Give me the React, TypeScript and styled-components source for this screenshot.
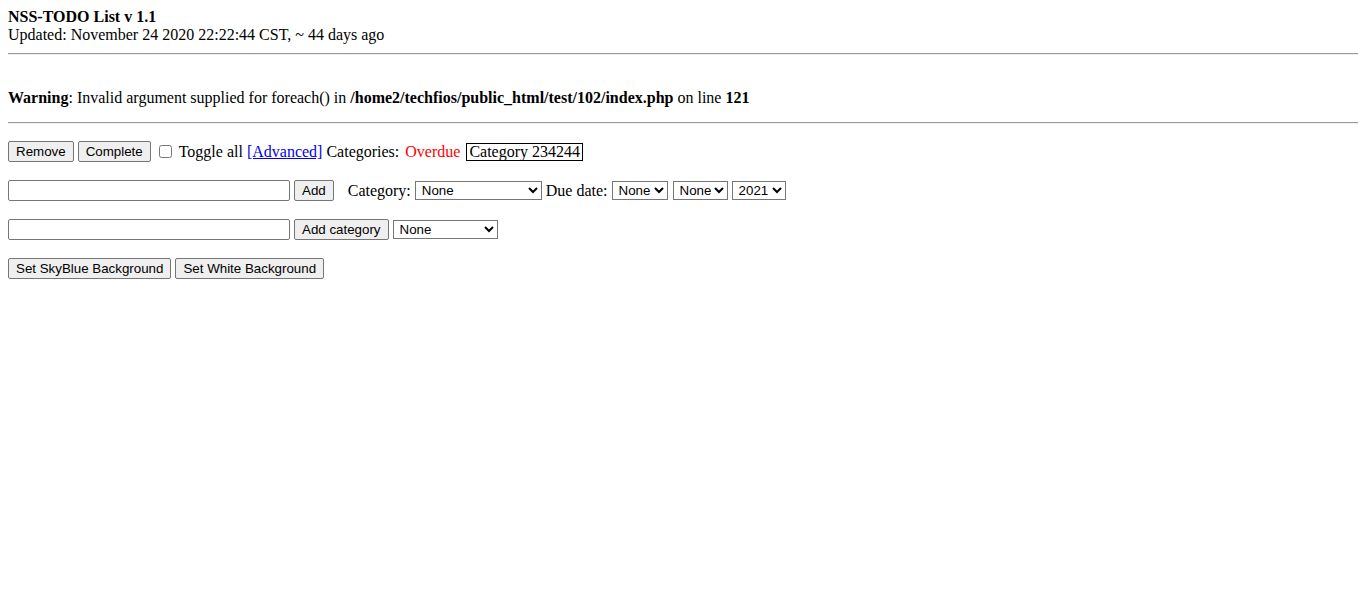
import React from "react";
import styled, { createGlobalStyle } from "styled-components";

const Global = createGlobalStyle`
  html, body { background: #fff; }
  body {
    margin: 8px;
    font-family: "Liberation Serif", "Times New Roman", serif;
    font-size: 16px;
    color: #000;
  }
`;

const Header = styled.header`
  line-height: 18.4px;
`;

const Title = styled.div`
  font-weight: bold;
`;

const Rule = styled.hr`
  margin: 8px 0;
  border: 0;
  border-top: 1px solid #9a9a9a;
  border-bottom: 1px solid #eeeeee;
  height: 0;
`;

const Warning = styled.div`
  line-height: 18.4px;
  padding: 26px 0 7px;
`;

const Form = styled.form`
  display: flex;
  flex-direction: column;
  gap: 18px;
  padding-top: 9px;
`;

const Row = styled.div<{ $gap?: number }>`
  display: flex;
  align-items: center;
  height: 21px;
  gap: ${(p) => p.$gap ?? 4}px;
  white-space: nowrap;
`;

const Button = styled.button`
  font-family: "Liberation Sans", Arial, sans-serif;
  font-size: 13.333px;
  height: 21px;
  padding: 1px 7px;
  border: 1px solid #767676;
  border-radius: 2px;
  background: #efefef;
  color: #000;
  box-sizing: border-box;
  line-height: 17px;
`;

const TextInput = styled.input`
  box-sizing: border-box;
  width: 282px;
  height: 21px;
  border: 1px solid #767676;
  border-radius: 2px;
  padding: 1px 2px;
  font-family: "Liberation Sans", Arial, sans-serif;
  font-size: 13.333px;
`;

const Select = styled.select<{ $w: number; $ml?: number }>`
  box-sizing: border-box;
  width: ${(p) => p.$w}px;
  margin-left: ${(p) => p.$ml ?? 0}px;
  height: 19px;
  border: 1px solid #767676;
  border-radius: 0;
  background: #fff;
  font-family: "Liberation Sans", Arial, sans-serif;
  font-size: 13.333px;
  color: #000;
  padding: 0 0 0 2px;
`;

const Check = styled.input`
  width: 13px;
  height: 13px;
  margin: 3px 3px 3px 4px;
`;

const Label = styled.span<{ $ml?: number }>`
  margin-left: ${(p) => p.$ml ?? 0}px;
`;

const Link = styled.a`
  color: #0000ee;
  text-decoration: underline;
`;

const Overdue = styled.span`
  color: #ff0000;
  margin-left: 2px;
`;

const CategoryTag = styled.span`
  border: 1px solid #000;
  padding: 0 2px;
  line-height: 16px;
  margin-left: 2px;
`;

export default function App() {
  return (
    <>
      <Global />
      <Header>
        <Title>NSS-TODO List v 1.1</Title>
        <div>Updated: November 24 2020 22:22:44 CST, ~ 44 days ago</div>
      </Header>
      <Rule />
      <Warning>
        <b>Warning</b>: Invalid argument supplied for foreach() in{" "}
        <b>/home2/techfios/public_html/test/102/index.php</b> on line <b>121</b>
      </Warning>
      <Rule />
      <Form onSubmit={(e) => e.preventDefault()}>
        <Row>
          <Button type="button">Remove</Button>
          <Button type="button">Complete</Button>
          <Check type="checkbox" />
          <span>Toggle all</span>
          <Link href="#">[Advanced]</Link>
          <span>Categories:</span>
          <Overdue>Overdue</Overdue>
          <CategoryTag>Category 234244</CategoryTag>
        </Row>
        <Row>
          <TextInput type="text" />
          <Button type="button">Add</Button>
          <Label $ml={10}>Category:</Label>
          <Select $w={127}>
            <option>None</option>
          </Select>
          <span>Due date:</span>
          <Select $w={56}>
            <option>None</option>
          </Select>
          <Select $w={55} $ml={1}>
            <option>None</option>
          </Select>
          <Select $w={54}>
            <option>2021</option>
          </Select>
        </Row>
        <Row>
          <TextInput type="text" />
          <Button type="button">Add category</Button>
          <Select $w={105}>
            <option>None</option>
          </Select>
        </Row>
        <Row>
          <Button type="button">Set SkyBlue Background</Button>
          <Button type="button">Set White Background</Button>
        </Row>
      </Form>
    </>
  );
}
